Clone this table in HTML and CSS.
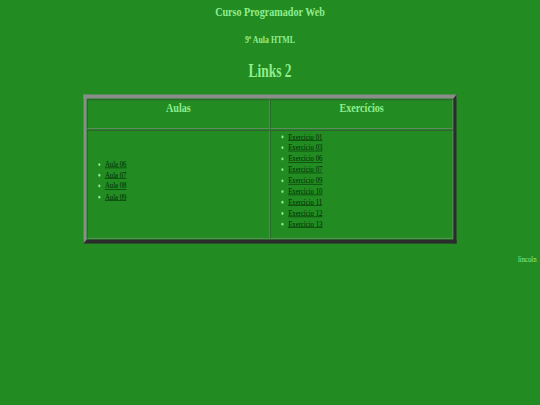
FILE: index.html
```html
<!DOCTYPE html>
<html lang="pt">
<head>
<meta charset="utf-8">
<title>Links 2</title>
<link rel="stylesheet" href="styles.css">
</head>
<body>
<div class="frame">
  <div class="page">
    <h2 class="site">Curso Programador Web</h2>
    <h3 class="lesson">9ª Aula HTML</h3>
    <h1 class="title">Links 2</h1>
    <table class="links">
      <tr>
        <th>Aulas</th>
        <th>Exercícios</th>
      </tr>
      <tr>
        <td>
          <ul class="list">
            <li><a href="#">Aula 06</a></li>
            <li><a href="#">Aula 07</a></li>
            <li><a href="#">Aula 08</a></li>
            <li><a href="#">Aula 09</a></li>
          </ul>
        </td>
        <td>
          <ul class="list">
            <li><a href="#">Exercício 01</a></li>
            <li><a href="#">Exercício 03</a></li>
            <li><a href="#">Exercício 06</a></li>
            <li><a href="#">Exercício 07</a></li>
            <li><a href="#">Exercício 09</a></li>
            <li><a href="#">Exercício 10</a></li>
            <li><a href="#">Exercício 11</a></li>
            <li><a href="#">Exercício 12</a></li>
            <li><a href="#">Exercício 13</a></li>
          </ul>
        </td>
      </tr>
    </table>
    <p class="author">lincoln</p>
  </div>
</div>
</body>
</html>
```
FILE: styles.css
```css
html, body {
  margin: 0;
  background: #228b22;
  overflow: hidden;
}

.frame {
  position: relative;
  width: 540px;
  height: 405px;
  overflow: hidden;
}

.page {
  position: absolute;
  top: 0;
  left: 0;
  box-sizing: border-box;
  width: 1280px;
  height: 720px;
  padding: 8px;
  transform: scale(0.421875, 0.5625);
  transform-origin: 0 0;
  font-family: "Liberation Serif", "Times New Roman", serif;
  font-size: 16px;
  color: #90ee90;
}

.site {
  margin: 0 0 24px;
  font-size: 24px;
  font-weight: bold;
  text-align: center;
}

.lesson {
  margin: 0 0 26px;
  font-size: 18.72px;
  font-weight: bold;
  text-align: center;
}

.title {
  margin: 0 0 24px;
  font-size: 32px;
  font-weight: bold;
  text-align: center;
}

.links {
  width: 70%;
  margin: 0 auto;
  border-collapse: separate;
  border-spacing: 2px;
  border: 7px solid;
  border-color: #8c8c8c #2c2c2c #2c2c2c #8c8c8c;
}

.links th,
.links td {
  width: 50%;
  border: 1px solid;
  border-color: #3a3a3a #8c8c8c #8c8c8c #3a3a3a;
  color: #90ee90;
}

.links th {
  padding: 0 1px 23px;
  font-size: 24px;
  font-weight: bold;
  text-align: center;
  vertical-align: top;
}

.links td {
  padding: 1px;
  vertical-align: middle;
  text-align: left;
}

.list {
  margin: 0 0 14px;
  padding-left: 40px;
  line-height: 19.4px;
}

.list a {
  color: #002a00;
  text-decoration: underline;
}

.author {
  margin: 19px 0 16px;
  text-align: right;
}
```
